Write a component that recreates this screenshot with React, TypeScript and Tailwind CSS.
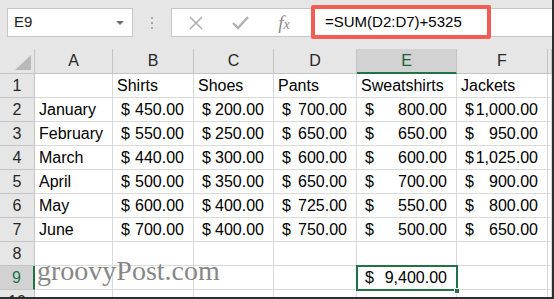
import React from "react";

const items = ["Shirts", "Shoes", "Pants", "Sweatshirts", "Jackets"];
const letters = ["A", "B", "C", "D", "E", "F", ""];

const months = [
  { name: "January", v: [450, 200, 700, 800, 1000] },
  { name: "February", v: [550, 250, 650, 650, 950] },
  { name: "March", v: [440, 300, 600, 600, 1025] },
  { name: "April", v: [500, 350, 650, 700, 900] },
  { name: "May", v: [600, 400, 725, 550, 800] },
  { name: "June", v: [700, 400, 750, 500, 650] },
];

const money = (n: number) =>
  n.toLocaleString("en-US", { minimumFractionDigits: 2, maximumFractionDigits: 2 });

const cell = "h-[24px] border-r border-b border-[#d9d9d9] bg-white text-black leading-[23px] whitespace-nowrap overflow-hidden";
const rowHead = "h-[24px] border-r border-b border-[#c4c4c4] bg-[#e6e6e6] text-[#262626] leading-[23px] text-center";

function Money({ n }: { n: number }) {
  return (
    <div className={`${cell} flex justify-between pl-[8px] pr-[9px]`}>
      <span>$</span>
      <span>{money(n)}</span>
    </div>
  );
}

function RowNum({ n, active }: { n: number; active?: boolean }) {
  if (active) {
    return (
      <div className="h-[24px] border-r-2 border-b border-r-[#217346] border-b-[#c4c4c4] bg-[#d2d2d2] text-[#217346] leading-[23px] text-center">
        {n}
      </div>
    );
  }
  return <div className={rowHead}>{n}</div>;
}

export default function App() {
  return (
    <div className="relative w-[554px] h-[299px] overflow-hidden bg-[#e6e6e6] border-r-2 border-b-2 border-[#2e2e2e] font-['Liberation_Sans',Arial,sans-serif]">
      {/* formula bar */}
      <div className="h-[49px] flex items-start pt-[8px] pl-[7px]">
        <div className="w-[126px] h-[29px] bg-white border border-[#c6c6c6] flex items-center justify-between pl-[6px] pr-[8px] text-[15px] text-[#222]">
          <span>E9</span>
          <svg width="8" height="4" viewBox="0 0 8 4">
            <path d="M0 0 L8 0 L4 4 Z" fill="#6f6f6f" />
          </svg>
        </div>
        <div className="w-[38px] h-[29px] flex flex-col items-center justify-center gap-[3px]">
          <span className="w-[2px] h-[2px] bg-[#a6a6a6]" />
          <span className="w-[2px] h-[2px] bg-[#a6a6a6]" />
          <span className="w-[2px] h-[2px] bg-[#a6a6a6]" />
        </div>
        <div className="flex-1 h-[29px] bg-white border border-r-0 border-[#c6c6c6] flex items-center">
          <div className="w-[47px] flex justify-center">
            <svg width="16" height="14" viewBox="0 0 16 14">
              <path d="M2 1 L14 13 M14 1 L2 13" stroke="#b0b0b0" strokeWidth="1.6" fill="none" />
            </svg>
          </div>
          <div className="w-[42px] flex justify-center">
            <svg width="17" height="14" viewBox="0 0 17 14">
              <path d="M1 7 L6 12 L16 1" stroke="#b0b0b0" strokeWidth="2.4" fill="none" />
            </svg>
          </div>
          <div className="w-[46px] flex justify-center font-['Liberation_Serif',serif] italic text-[19px] text-[#8a8a8a] leading-none">
            <span>f</span>
            <span className="text-[14px] mt-[5px]">x</span>
          </div>
          <div className="pl-[18px] text-[15px] text-black">=SUM(D2:D7)+5325</div>
        </div>
      </div>

      {/* grid */}
      <div className="grid grid-cols-[35px_78px_81px_80px_83px_100px_91px_1fr] text-[16px]">
        <div className="h-[25px] border-r border-b border-[#c4c4c4] bg-[#e6e6e6] relative">
          <svg className="absolute left-[15px] top-[6px]" width="16" height="15" viewBox="0 0 16 15">
            <path d="M16 0 L16 15 L0 15 Z" fill="#b9b9b9" />
          </svg>
        </div>
        {letters.map((l) =>
          l === "E" ? (
            <div
              key={l}
              className="h-[25px] border-r border-b-2 border-r-[#c4c4c4] border-b-[#217346] bg-[#d2d2d2] text-[#1d5e39] leading-[24px] text-center"
            >
              {l}
            </div>
          ) : (
            <div
              key={l || "G"}
              className="h-[25px] border-r border-b border-[#c4c4c4] bg-[#e6e6e6] text-[#262626] leading-[24px] text-center"
            >
              {l}
            </div>
          )
        )}

        {/* row 1 */}
        <RowNum n={1} />
        <div className={cell} />
        {items.map((it) => (
          <div key={it} className={`${cell} pl-[4px]`}>
            {it}
          </div>
        ))}
        <div className={cell} />

        {months.map((m, i) => (
          <React.Fragment key={m.name}>
            <RowNum n={i + 2} />
            <div className={`${cell} pl-[4px]`}>{m.name}</div>
            {m.v.map((n, j) => (
              <Money key={j} n={n} />
            ))}
            <div className={cell} />
          </React.Fragment>
        ))}

        {/* row 8 */}
        <RowNum n={8} />
        {letters.map((l) => (
          <div key={"r8" + l} className={cell} />
        ))}

        {/* row 9 */}
        <RowNum n={9} active />
        <div className={cell} />
        <div className={cell} />
        <div className={cell} />
        <div className={cell} />
        <div className="relative">
          <Money n={9400} />
          <div className="absolute -left-[1px] -top-[1px] w-[102px] h-[26px] border-2 border-[#217346]" />
          <div className="absolute right-[-3px] bottom-[-4px] w-[6px] h-[6px] bg-[#217346] border border-white" />
        </div>
        <div className={cell} />
        <div className={cell} />

        {/* row 10 */}
        <div className={rowHead}>10</div>
        {letters.map((l) => (
          <div key={"r10" + l} className={cell} />
        ))}
      </div>

      {/* formula annotation */}
      <div className="absolute left-[311px] top-[5px] w-[180px] h-[34px] border-4 border-[#f35c54] rounded-[2px]" />

      {/* watermark */}
      <div className="absolute left-[37px] top-[257px] font-['Liberation_Serif',serif] text-[28px] leading-none text-[#7a7a7a] opacity-90 pointer-events-none">
        groovyPost.com
      </div>
    </div>
  );
}
